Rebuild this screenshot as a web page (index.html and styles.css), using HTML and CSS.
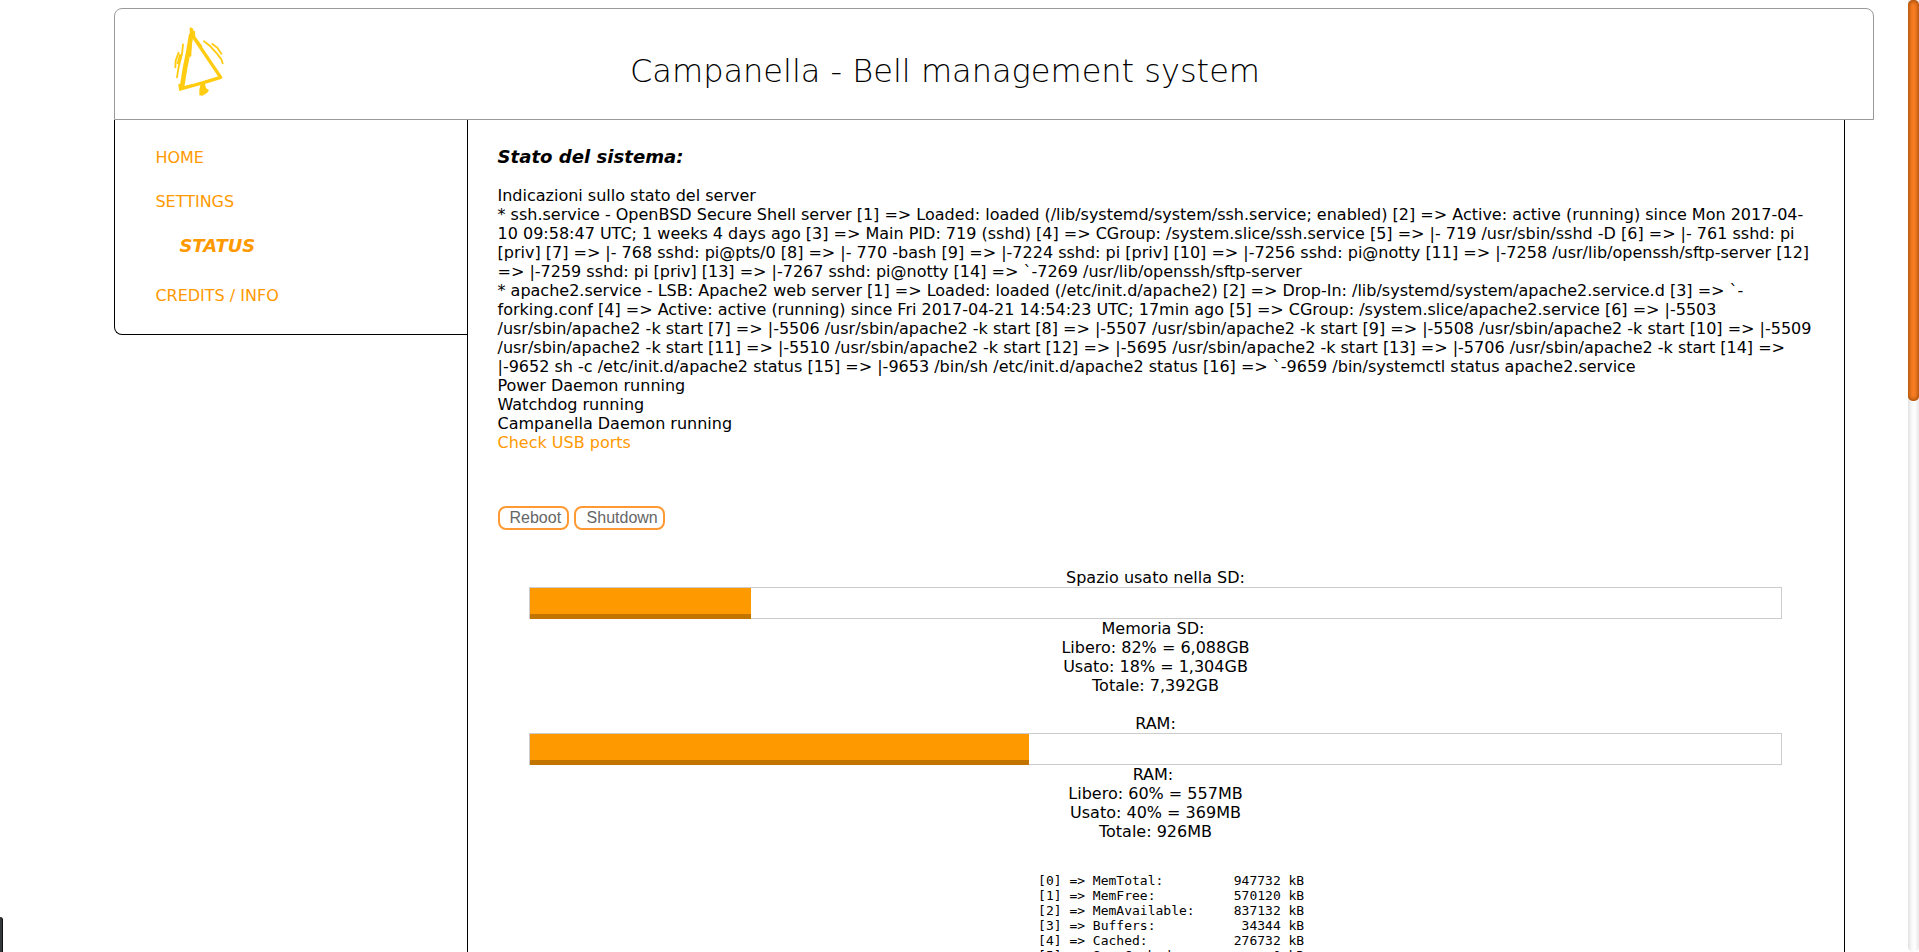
FILE: index.html
```html
<!DOCTYPE html>
<html lang="it">
<head>
<meta charset="utf-8">
<title>Campanella</title>
<link rel="stylesheet" href="styles.css">
</head>
<body>
<header class="header">
  <svg class="logo" viewBox="0 0 240 270" fill="none" stroke="#fc1" stroke-linecap="round" stroke-linejoin="round">
    <path stroke-width="10" d="M95 44 L95 58 L182 187 L130 203 L62 222"/>
    <path stroke-width="14" d="M93 62 L86 106 L75 160 L66 216"/>
    <path stroke-width="6" d="M92 40 L93 80 L91 122 M102 50 L103 66 L124 94 M58 209 L60 224 M72 217 L94 211"/>
    <path fill="#fc1" stroke="none" d="M122 206 L135 207 L138 219 L147 226 L141 234 L127 242 L118 241 L118 224 Z"/>
    <path stroke-width="5.5" d="M69 88 L66 117 L56 155 L51 187 M56 113 L47 137 L46 157 M60 120 L53 145 M132 79 L151 94 L171 116 L184 133 L188 145 M157 87 L172 98 L184 116"/>
  </svg>
  <h1 class="title">Campanella - Bell management system</h1>
</header>
<div class="page">
  <nav class="menu">
    <a class="link" href="#">HOME</a>
    <a class="link" href="#">SETTINGS</a>
    <a class="link current" href="#">STATUS</a>
    <a class="link" href="#">CREDITS / INFO</a>
  </nav>
  <main class="content">
    <h3 class="heading">Stato del sistema:</h3>
    <p class="log">Indicazioni sullo stato del server<br>
* ssh.service - OpenBSD Secure Shell server [1] =&gt; Loaded: loaded (/lib/systemd/system/ssh.service; enabled) [2] =&gt; Active: active (running) since Mon 2017-04-<br>10 09:58:47 UTC; 1 weeks 4 days ago [3] =&gt; Main PID: 719 (sshd) [4] =&gt; CGroup: /system.slice/ssh.service [5] =&gt; |- 719 /usr/sbin/sshd -D [6] =&gt; |- 761 sshd: pi<br>[priv] [7] =&gt; |- 768 sshd: pi@pts/0 [8] =&gt; |- 770 -bash [9] =&gt; |-7224 sshd: pi [priv] [10] =&gt; |-7256 sshd: pi@notty [11] =&gt; |-7258 /usr/lib/openssh/sftp-server [12]<br>=&gt; |-7259 sshd: pi [priv] [13] =&gt; |-7267 sshd: pi@notty [14] =&gt; `-7269 /usr/lib/openssh/sftp-server<br>
* apache2.service - LSB: Apache2 web server [1] =&gt; Loaded: loaded (/etc/init.d/apache2) [2] =&gt; Drop-In: /lib/systemd/system/apache2.service.d [3] =&gt; `-<br>forking.conf [4] =&gt; Active: active (running) since Fri 2017-04-21 14:54:23 UTC; 17min ago [5] =&gt; CGroup: /system.slice/apache2.service [6] =&gt; |-5503<br>/usr/sbin/apache2 -k start [7] =&gt; |-5506 /usr/sbin/apache2 -k start [8] =&gt; |-5507 /usr/sbin/apache2 -k start [9] =&gt; |-5508 /usr/sbin/apache2 -k start [10] =&gt; |-5509<br>/usr/sbin/apache2 -k start [11] =&gt; |-5510 /usr/sbin/apache2 -k start [12] =&gt; |-5695 /usr/sbin/apache2 -k start [13] =&gt; |-5706 /usr/sbin/apache2 -k start [14] =&gt;<br>|-9652 sh -c /etc/init.d/apache2 status [15] =&gt; |-9653 /bin/sh /etc/init.d/apache2 status [16] =&gt; `-9659 /bin/systemctl status apache2.service<br>
Power Daemon running<br>
Watchdog running<br>
Campanella Daemon running<br>
<a class="link" href="#">Check USB ports</a></p>
    <div class="actions">
      <button class="button">Reboot</button>
      <button class="button shutdown">Shutdown</button>
    </div>
    <section class="usage">
      <div>Spazio usato nella SD:</div>
      <div class="bar"><div class="fill" style="width:17.64%"></div></div>
      <div>Memoria SD:&nbsp;</div>
      <div>Libero: 82% = 6,088GB</div>
      <div>Usato: 18% = 1,304GB</div>
      <div>Totale: 7,392GB</div>
    </section>
    <section class="usage">
      <div>RAM:</div>
      <div class="bar"><div class="fill" style="width:39.85%"></div></div>
      <div>RAM:&nbsp;</div>
      <div>Libero: 60% = 557MB</div>
      <div>Usato: 40% = 369MB</div>
      <div>Totale: 926MB</div>
    </section>
    <pre class="meminfo">    [0] =&gt; MemTotal:         947732 kB
    [1] =&gt; MemFree:          570120 kB
    [2] =&gt; MemAvailable:     837132 kB
    [3] =&gt; Buffers:           34344 kB
    [4] =&gt; Cached:           276732 kB
    [5] =&gt; SwapCached:            0 kB</pre>
  </main>
</div>
<div class="scroll"><div class="thumb"></div></div>
<div class="edge"></div>
</body>
</html>
```

FILE: styles.css
```css
* { box-sizing: border-box; }
html { height: 100%; overflow: hidden; }
body {
  height: 952px;
  margin: 0;
  padding: 8px 45px 0 114px;
  overflow: hidden;
  display: flex;
  flex-direction: column;
  background: #fff;
  color: #000;
  font: 16px/19px "DejaVu Sans", sans-serif;
}
.header {
  flex: none;
  display: flex;
  align-items: flex-start;
  height: 112px;
  border: 1px solid #999;
  border-radius: 8px 8px 0 0;
}
.logo { width: 80px; height: 90px; margin: 6px 0 0 45px; }
.title {
  margin: 43px 0 0 390px;
  font-size: 32px;
  line-height: 38px;
  font-weight: 200;
  white-space: nowrap;
}
.page {
  flex: 1;
  display: flex;
  align-items: flex-start;
  min-height: 0;
}
.menu {
  flex: none;
  display: flex;
  flex-direction: column;
  width: 353px;
  height: 215px;
  padding: 28px 0 0 40.4px;
  border: solid #000;
  border-width: 0 0 1px 1px;
  border-bottom-left-radius: 8px;
}
.menu .link { margin-bottom: 25px; }
.link { color: #f90; text-decoration: none; }
.menu .current {
  margin: -1px 0 30px 24px;
  font-size: 18px;
  line-height: 21px;
  font-weight: bold;
  font-style: italic;
}
.content {
  width: 1378px;
  height: 100%;
  padding: 26px 30.5px 0 29.5px;
  border: solid #000;
  border-width: 0 1px;
  overflow: hidden;
}
.heading {
  margin: 0 0 18px;
  font-size: 18.1px;
  line-height: 22px;
  font-style: italic;
}
.log { margin: 0; white-space: nowrap; }
.actions { display: flex; gap: 5px; margin: 54px 0 38px 0.5px; }
.button {
  height: 24px;
  padding: 0 6px 0 9.5px;
  border: 2px solid #f93;
  border-radius: 8px;
  background: #fff;
  color: #666;
  font: 16px/20px "Liberation Sans", sans-serif;
}
.shutdown { padding: 0 5.3px 0 10.5px; }
.usage { margin: 0 31.5px 19px; text-align: center; }
.bar { height: 32px; border: 1px solid #ccc; }
.fill { height: 31px; background: #f90; border-bottom: 5px solid #c17400; }
.meminfo {
  width: fit-content;
  margin: 32px auto 0;
  font: 13px/15px "DejaVu Sans Mono", monospace;
}
.scroll {
  position: absolute;
  top: 0;
  right: 0;
  width: 11px;
  height: 952px;
  border-radius: 0 0 5px 5px;
  background: linear-gradient(90deg, #e2e2e2, #f8f8f8 35%, #fff 60%, #e8e8e8);
}
.thumb {
  height: 401px;
  border-radius: 5px;
  background: #fa7e22;
  box-shadow: inset 0 0 4px 1px #964708;
}
.edge {
  position: absolute;
  left: 0;
  top: 917px;
  width: 3px;
  height: 35px;
  border-right: 1px solid #111;
  border-top-right-radius: 3px;
  background: #33393b;
}
```
